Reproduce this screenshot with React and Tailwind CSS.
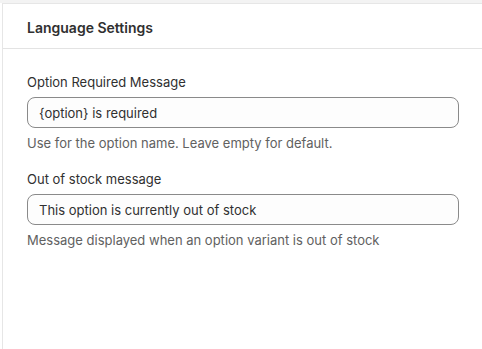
export default function App() {
  const field = (label, value, help) => (
    <div className="flex flex-col">
      <label className="text-[13px] leading-5 text-[#303030]">{label}</label>
      <input
        type="text"
        defaultValue={value}
        className="mt-[5px] h-[31px] w-full rounded-[8px] border border-[#8a8a8a] bg-[#fdfdfd] px-[11px] text-[13px] text-[#303030] outline-none"
      />
      <p className="mt-[5px] text-[13px] leading-5 text-[#616161]">{help}</p>
    </div>
  );

  return (
    <div
      className="h-[349px] w-[482px] overflow-hidden bg-white"
      style={{ fontFamily: 'Inter, "Noto Sans", sans-serif' }}
    >
      <div className="h-[3px] bg-[#f3f3f3]" />
      <div className="ml-[2px] h-[346px] border-l border-t border-[#e6e6e6] bg-white">
        <div className="flex h-[45px] items-center border-b border-[#e3e3e3] pl-[24px] pt-[2px]">
          <h2 className="text-[14px] font-semibold text-[#303030]">Language Settings</h2>
        </div>
        <div className="flex flex-col gap-[16px] pb-4 pl-[24px] pr-[23px] pt-[23px]">
          {field(
            'Option Required Message',
            '{option} is required',
            'Use for the option name. Leave empty for default.'
          )}
          {field(
            'Out of stock message',
            'This option is currently out of stock',
            'Message displayed when an option variant is out of stock'
          )}
        </div>
      </div>
    </div>
  );
}
